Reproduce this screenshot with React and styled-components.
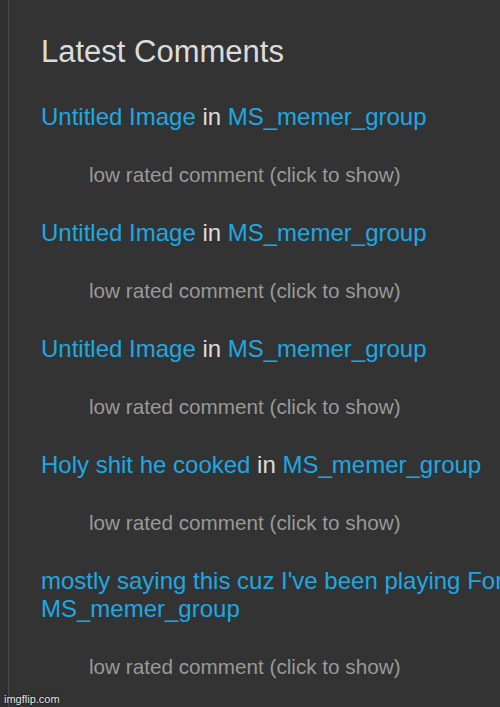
import React from 'react'
import styled, { createGlobalStyle } from 'styled-components'

const GlobalStyle = createGlobalStyle`
  html, body {
    margin: 0;
    padding: 0;
    background: #333333;
    overflow: hidden;
  }
  body {
    font-family: "Liberation Sans", Arial, sans-serif;
  }
`

const comments = [
  { title: 'Untitled Image', group: 'MS_memer_group' },
  { title: 'Untitled Image', group: 'MS_memer_group' },
  { title: 'Untitled Image', group: 'MS_memer_group' },
  { title: 'Holy shit he cooked', group: 'MS_memer_group' },
  { title: "mostly saying this cuz I've been playing Fortnite", group: 'MS_memer_group' },
]

const App = () => {
  return (
    <>
      <GlobalStyle />
      <Page>
        <Gutter />
        <Panel>
          <Heading>Latest Comments</Heading>
          <List>
            {comments.map((c, i) => (
              <Comment key={i}>
                <Title>
                  <Link href="#">{c.title}</Link> in <Link href="#">{c.group}</Link>
                </Title>
                <Hidden>low rated comment (click to show)</Hidden>
              </Comment>
            ))}
          </List>
        </Panel>
        <Watermark>imgflip.com</Watermark>
      </Page>
    </>
  )
}

const Page = styled.div`
  position: relative;
  display: flex;
  width: 500px;
  height: 707px;
  overflow: hidden;
  background: #333333;
`

const Gutter = styled.div`
  flex: 0 0 8px;
  background: #303030;
  border-right: 1px solid #4b4b4b;
`

const Panel = styled.div`
  flex: 0 0 620px;
  padding: 34px 0 0 32px;
`

const Heading = styled.h2`
  margin: 0 0 33px;
  font-size: 31px;
  line-height: 36px;
  font-weight: 400;
  color: #dcdcdc;
`

const List = styled.div`
  display: flex;
  flex-direction: column;
  gap: 32px;
`

const Comment = styled.div`
  display: flex;
  flex-direction: column;
  gap: 32px;
`

const Title = styled.div`
  font-size: 24px;
  line-height: 28px;
  color: #dcdcdc;
`

const Link = styled.a`
  color: #1ea8e2;
  text-decoration: none;
`

const Hidden = styled.div`
  padding-left: 48px;
  font-size: 20.7px;
  line-height: 24px;
  color: #999999;
  cursor: pointer;
`

const Watermark = styled.span`
  position: absolute;
  left: 4px;
  bottom: 2px;
  font-size: 11px;
  color: #e6e6e6;
  text-shadow: 0 0 2px #000;
`

export default App
